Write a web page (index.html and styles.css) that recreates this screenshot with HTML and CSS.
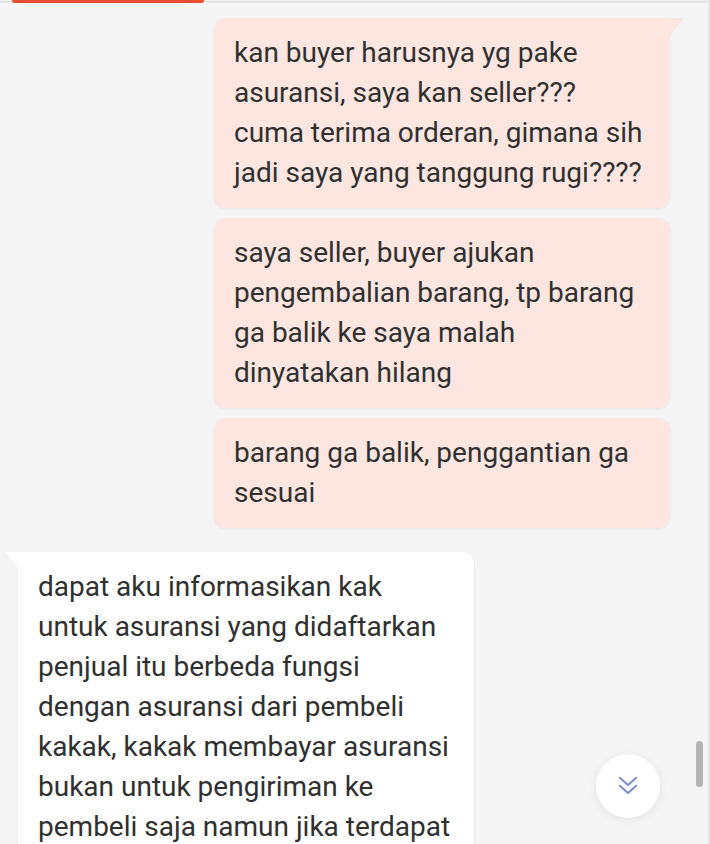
FILE: index.html
```
<!DOCTYPE html>
<html lang="id">
<head>
    <meta charset="UTF-8">
    <meta name="viewport" content="width=device-width, initial-scale=1.0">
    <title>Chat</title>
    <link rel="stylesheet" href="styles.css">
</head>
<body>
    <div class="frame">
        <div class="topbar">
            <div class="tab-indicator"></div>
        </div>

        <div class="chat-body">
            <div class="messages">
                <div class="bubble out tail">
                    kan buyer harusnya yg pake asuransi, saya kan seller??? cuma terima orderan, gimana sih jadi saya yang tanggung rugi????
                </div>
                <div class="bubble out">
                    saya seller, buyer ajukan pengembalian barang, tp barang ga balik ke saya malah dinyatakan hilang
                </div>
                <div class="bubble out">
                    barang ga balik, penggantian ga sesuai
                </div>
                <div class="bubble in tail">
                    dapat aku informasikan kak untuk asuransi yang didaftarkan penjual itu berbeda fungsi dengan asuransi dari pembeli kakak, kakak membayar asuransi bukan untuk pengiriman ke pembeli saja namun jika terdapat pengembalian barang juga
                </div>
            </div>

            <div class="scroll-track">
                <div class="scroll-thumb"></div>
            </div>

            <button class="scroll-down" aria-label="Scroll ke bawah">
                <svg width="22" height="22" viewBox="0 0 22 22" fill="none" stroke="#7d8fc4" stroke-width="2.2" stroke-linecap="round" stroke-linejoin="round">
                    <polyline points="3,3 11,10 19,3"></polyline>
                    <polyline points="3,11 11,18 19,11"></polyline>
                </svg>
            </button>
        </div>
    </div>
</body>
</html>
```

FILE: styles.css
```
:root {
    --bg: #f5f5f5;
    --orange: #ee4d2d;
    --bubble-out: #fde6e0;
    --bubble-in: #ffffff;
    --text: #303030;
}

* {
    margin: 0;
    padding: 0;
    box-sizing: border-box;
}

body {
    background: var(--bg);
    color: var(--text);
    font-family: Roboto, 'Noto Sans', sans-serif;
    overflow: hidden;
}

.frame {
    width: 710px;
    height: 844px;
    border-right: 2px solid #e6e6e6;
    display: flex;
    flex-direction: column;
    overflow: hidden;
}

.topbar {
    height: 3px;
    flex-shrink: 0;
    background: linear-gradient(#f0f0f0 0 1px, #e3e3e3 1px 3px);
}

.tab-indicator {
    width: 192px;
    height: 3px;
    margin-left: 12px;
    background: var(--orange);
    border-radius: 0 0 3px 3px;
}

.chat-body {
    flex: 1;
    position: relative;
    display: flex;
    overflow: hidden;
}

.messages {
    flex: 1;
    display: flex;
    flex-direction: column;
    gap: 10px;
    padding: 15px 0 0;
}

.bubble {
    position: relative;
    width: 456px;
    padding: 15px 20px;
    font-size: 28px;
    line-height: 40px;
    border-radius: 12px;
    box-shadow: 0 1px 3px rgba(0,0,0,0.08);
    flex-shrink: 0;
}

.bubble.out {
    align-self: flex-end;
    margin-right: 25px;
    background: var(--bubble-out);
}

.bubble.in {
    align-self: flex-start;
    margin-left: 18px;
    margin-top: 14px;
    background: var(--bubble-in);
}

.bubble.out.tail {
    border-top-right-radius: 0;
}

.bubble.in.tail {
    border-top-left-radius: 0;
}

.bubble.tail::before {
    content: '';
    position: absolute;
    top: 0;
    width: 14px;
    height: 18px;
}

.bubble.out.tail::before {
    right: -14px;
    background: var(--bubble-out);
    clip-path: polygon(0 0, 100% 0, 0 100%);
}

.bubble.in.tail::before {
    left: -12px;
    width: 12px;
    height: 16px;
    background: var(--bubble-in);
    clip-path: polygon(0 0, 100% 0, 100% 100%);
}

.scroll-track {
    width: 11px;
    flex-shrink: 0;
    margin-right: 2px;
}

.scroll-thumb {
    width: 7px;
    height: 46px;
    margin: 738px 0 0 1px;
    background: #b3b3b3;
    border-radius: 4px;
}

.scroll-down {
    position: absolute;
    right: 48px;
    bottom: 26px;
    width: 64px;
    height: 64px;
    border: none;
    border-radius: 50%;
    background: #fff;
    box-shadow: 0 2px 8px rgba(0,0,0,0.08);
    display: flex;
    align-items: center;
    justify-content: center;
    cursor: pointer;
}
```
